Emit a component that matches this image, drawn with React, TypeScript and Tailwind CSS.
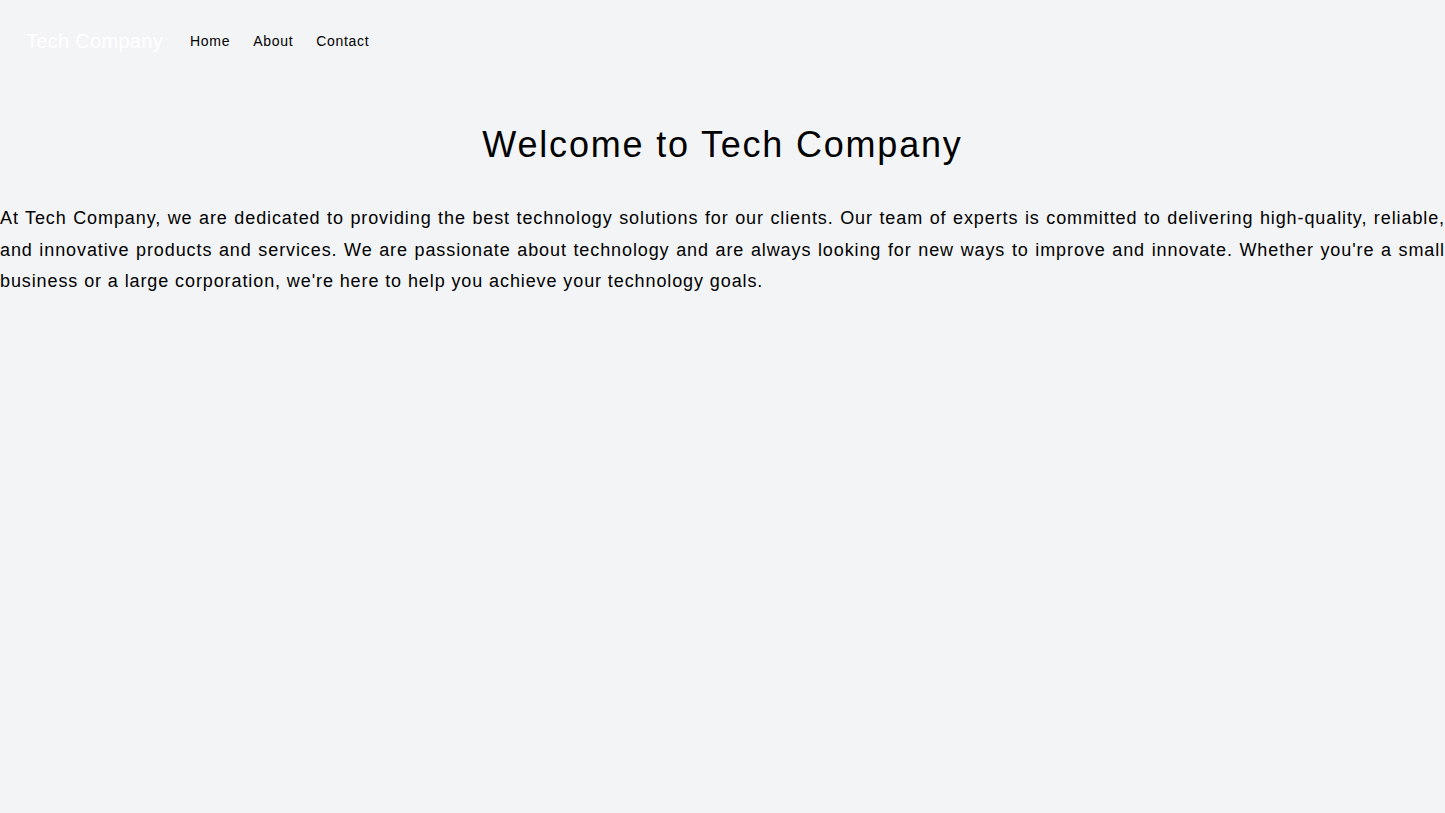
const links = ["Home", "About", "Contact"];

export default function App() {
  return (
    <div className="min-h-screen bg-gray-100 font-['Liberation_Sans',Arial,sans-serif] text-black">
      <nav className="flex h-[82px] items-center pl-[26px] pr-6">
        <a href="#" className="mr-[27px] text-xl tracking-[0.015em] text-white">
          Tech Company
        </a>
        <ul className="flex gap-[23px] text-sm tracking-wider">
          {links.map((link) => (
            <li key={link}>
              <a href="#">{link}</a>
            </li>
          ))}
        </ul>
      </nav>

      <main>
        <h1 className="mt-[43px] mb-[38px] text-center text-4xl tracking-wider">
          Welcome to Tech Company
        </h1>
        <p className="text-justify text-lg leading-[1.75] tracking-wider">
          At Tech Company, we are dedicated to providing the best technology solutions for our clients. Our team of
          experts is committed to delivering high-quality, reliable, and innovative products and services. We are
          passionate about technology and are always looking for new ways to improve and innovate. Whether you're a
          small business or a large corporation, we're here to help you achieve your technology goals.
        </p>
      </main>
    </div>
  );
}
